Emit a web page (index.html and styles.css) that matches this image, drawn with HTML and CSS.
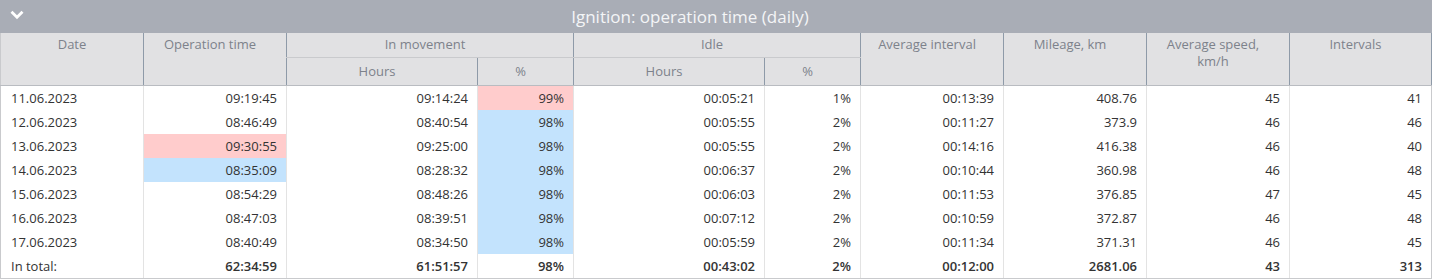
FILE: index.html
```html
<!DOCTYPE html>
<html>
<head>
<meta charset="utf-8">
<link rel="stylesheet" href="styles.css">
</head>
<body>
<div class="panel">
  <div class="bar">
    <svg class="chev" width="14" height="10" viewBox="0 0 14 10"><path d="M1.5 1.8 L7 7.2 L12.5 1.8" fill="none" stroke="#fff" stroke-width="2.8"/></svg>
    <div class="title">Ignition: operation time (daily)</div>
  </div>
  <table class="grid">
    <colgroup>
      <col style="width:143px"><col style="width:143px"><col style="width:191px"><col style="width:96px"><col style="width:191px"><col style="width:96px"><col style="width:143px"><col style="width:143px"><col style="width:143px"><col>
    </colgroup>
    <thead>
      <tr class="h1">
        <th rowspan="2" class="first">Date</th>
        <th rowspan="2">Operation time</th>
        <th colspan="2">In movement</th>
        <th colspan="2">Idle</th>
        <th rowspan="2">Average interval</th>
        <th rowspan="2">Mileage, km</th>
        <th rowspan="2">Average speed,<br>km/h</th>
        <th rowspan="2">Intervals</th>
      </tr>
      <tr class="h2">
        <th>Hours</th><th>%</th><th>Hours</th><th>%</th>
      </tr>
    </thead>
    <tbody>
      <tr><td class="l">11.06.2023</td><td>09:19:45</td><td>09:14:24</td><td class="red">99%</td><td>00:05:21</td><td>1%</td><td>00:13:39</td><td>408.76</td><td>45</td><td>41</td></tr>
      <tr><td class="l">12.06.2023</td><td>08:46:49</td><td>08:40:54</td><td class="blue">98%</td><td>00:05:55</td><td>2%</td><td>00:11:27</td><td>373.9</td><td>46</td><td>46</td></tr>
      <tr><td class="l">13.06.2023</td><td class="red">09:30:55</td><td>09:25:00</td><td class="blue">98%</td><td>00:05:55</td><td>2%</td><td>00:14:16</td><td>416.38</td><td>46</td><td>40</td></tr>
      <tr><td class="l">14.06.2023</td><td class="blue">08:35:09</td><td>08:28:32</td><td class="blue">98%</td><td>00:06:37</td><td>2%</td><td>00:10:44</td><td>360.98</td><td>46</td><td>48</td></tr>
      <tr><td class="l">15.06.2023</td><td>08:54:29</td><td>08:48:26</td><td class="blue">98%</td><td>00:06:03</td><td>2%</td><td>00:11:53</td><td>376.85</td><td>47</td><td>45</td></tr>
      <tr><td class="l">16.06.2023</td><td>08:47:03</td><td>08:39:51</td><td class="blue">98%</td><td>00:07:12</td><td>2%</td><td>00:10:59</td><td>372.87</td><td>46</td><td>48</td></tr>
      <tr><td class="l">17.06.2023</td><td>08:40:49</td><td>08:34:50</td><td class="blue">98%</td><td>00:05:59</td><td>2%</td><td>00:11:34</td><td>371.31</td><td>46</td><td>45</td></tr>
      <tr class="total"><td class="l">In total:</td><td>62:34:59</td><td>61:51:57</td><td>98%</td><td>00:43:02</td><td>2%</td><td>00:12:00</td><td>2681.06</td><td>43</td><td>313</td></tr>
    </tbody>
  </table>
</div>
</body>
</html>
```
FILE: styles.css
```css
html, body {
  margin: 0;
  padding: 0;
  background: #fff;
}
.panel {
  width: 1432px;
  font-family: "Open Sans", "Liberation Sans", sans-serif;
}
.bar {
  height: 33px;
  background: #a9adb6;
  display: flex;
  align-items: center;
  position: relative;
}
.chev {
  position: absolute;
  left: 10px;
  top: 10px;
}
.title {
  flex: 1;
  text-align: center;
  color: #f4f5f7;
  font-size: 17px;
  padding-right: 52px;
  padding-bottom: 1px;
}
.grid {
  width: 1432px;
  border-collapse: collapse;
  table-layout: fixed;
  font-size: 13px;
  color: #333;
}
.grid th {
  background: #e1e1e3;
  color: #7d828b;
  font-weight: normal;
  line-height: 17px;
  border-left: 1px solid #8e9aa8;
  border-bottom: 1px solid #c9cacd;
  vertical-align: top;
  padding: 3px 12px 0 2px;
}
.grid .h1 th {
  height: 21px;
}
.grid .h1 th[rowspan] {
  border-bottom: 1px solid #b9bcc1;
}
.grid .h2 th {
  height: 27px;
  vertical-align: middle;
  padding: 0 12px 0 2px;
  border-bottom: 1px solid #b9bcc1;
}
.grid th.first {
  border-left: 1px solid #c9cacd;
  padding: 3px 4px 0;
}
.grid th:last-child {
  border-right: 1px solid #8e9aa8;
}
.grid td {
  height: 24px;
  padding: 0 9px 0 6px;
  text-align: right;
  border-left: 1px solid #e3e3e3;
  line-height: 16px;
  white-space: nowrap;
}
.grid td:last-child {
  border-right: 1px solid #c9cacd;
}
.grid td.l {
  text-align: left;
  padding-left: 10px;
  border-left: 1px solid #c9cacd;
}
.grid td.red {
  background: #ffcccc;
}
.grid td.blue {
  background: #c3e3fd;
}
.grid tr.total td {
  font-weight: 600;
  border-bottom: 2px solid #c9cacd;
}
.grid tr.total td.l {
  font-weight: normal;
}
```
